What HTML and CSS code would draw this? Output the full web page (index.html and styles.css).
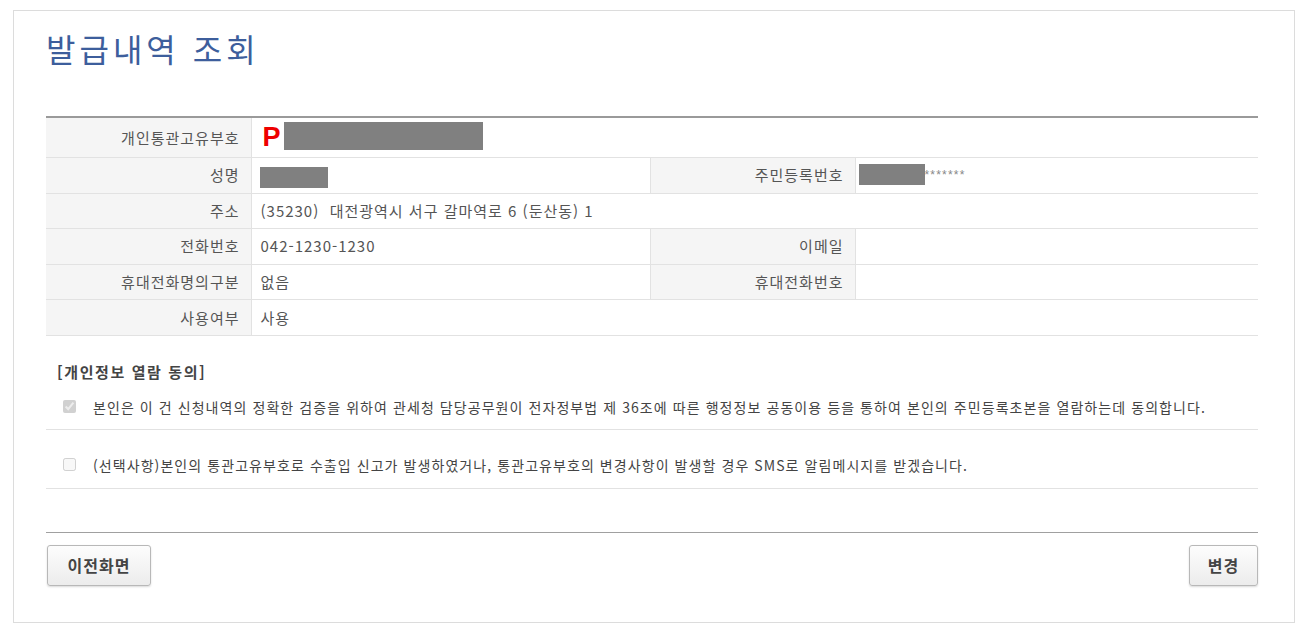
FILE: index.html
```html
<!DOCTYPE html>
<html lang="ko">
<head>
<meta charset="utf-8">
<title>발급내역 조회</title>
<link rel="stylesheet" href="styles.css">
</head>
<body>
<div class="page">
  <h1 class="title">발급내역 조회</h1>
  <table class="info">
    <colgroup>
      <col class="c-label"><col class="c-value"><col class="c-label"><col class="c-value2">
    </colgroup>
    <tr class="first">
      <th>개인통관고유부호</th>
      <td colspan="3"><span class="pcode">P</span><span class="mask mask-code"></span></td>
    </tr>
    <tr>
      <th>성명</th>
      <td><span class="mask mask-name"></span></td>
      <th>주민등록번호</th>
      <td><span class="mask mask-rrn"></span><span class="stars">*******</span></td>
    </tr>
    <tr>
      <th>주소</th>
      <td colspan="3">(35230)&nbsp;&nbsp;대전광역시 서구 갈마역로 6 (둔산동) 1</td>
    </tr>
    <tr>
      <th>전화번호</th>
      <td>042-1230-1230</td>
      <th>이메일</th>
      <td></td>
    </tr>
    <tr>
      <th>휴대전화명의구분</th>
      <td>없음</td>
      <th>휴대전화번호</th>
      <td></td>
    </tr>
    <tr>
      <th>사용여부</th>
      <td colspan="3">사용</td>
    </tr>
  </table>

  <div class="consent">
    <p class="consent-title">[개인정보 열람 동의]</p>
    <label class="agree agree-first">
      <input type="checkbox" checked disabled>
      <span>본인은 이 건 신청내역의 정확한 검증을 위하여 관세청 담당공무원이 전자정부법 제 36조에 따른 행정정보 공동이용 등을 통하여 본인의 주민등록초본을 열람하는데 동의합니다.</span>
    </label>
    <label class="agree agree-second">
      <input type="checkbox" disabled>
      <span>(선택사항)본인의 통관고유부호로 수출입 신고가 발생하였거나, 통관고유부호의 변경사항이 발생할 경우 SMS로 알림메시지를 받겠습니다.</span>
    </label>
  </div>

  <div class="actions">
    <button class="btn btn-prev">이전화면</button>
    <button class="btn btn-change">변경</button>
  </div>
</div>
</body>
</html>
```

FILE: styles.css
```css
html, body {
  margin: 0;
  padding: 0;
  background: #fff;
}
body {
  font-family: "Noto Sans CJK KR", "Noto Sans", sans-serif;
  color: #555;
  font-size: 13px;
}
.page {
  margin: 10px 8px 0 13px;
  border: 1px solid #dcdcdc;
  height: 613px;
  padding: 0 36px 0 32px;
  box-sizing: border-box;
}
.title {
  margin: 14px 0 0 0;
  font-size: 32px;
  font-weight: 400;
  letter-spacing: 4px;
  color: #3d5e9c;
  line-height: 46px;
  height: 91px;
}
.info {
  width: 100%;
  border-collapse: collapse;
  border-top: 2px solid #9a9a9a;
  table-layout: fixed;
}
.c-label { width: 205px; }
.c-value { width: 399px; }
.info th, .info td {
  height: 34.6px;
  border-bottom: 1px solid #e2e2e2;
  padding: 0;
  font-size: 15px;
  letter-spacing: 1px;
  line-height: 20px;
}
.info tr.first th, .info tr.first td { height: 39px; }
.info th {
  background: #f5f5f5;
  text-align: right;
  padding-right: 11px;
  font-weight: 400;
  color: #555;
  border-right: 1px solid #e2e2e2;
  border-left: 1px solid #e2e2e2;
}
.info tr th:first-child { border-left: none; }
.info td {
  padding-left: 9px;
  color: #555;
}
.pcode {
  color: #e00;
  font-weight: 700;
  font-size: 27px;
  letter-spacing: 0;
  vertical-align: middle;
  font-family: "Liberation Sans", Arial, sans-serif;
  margin-left: 2px;
  position: relative;
  top: -1px;
}
.mask {
  display: inline-block;
  background: #808080;
  vertical-align: middle;
}
.mask-code { width: 199px; height: 28px; margin-left: 3px; position: relative; top: -2px; }
.mask-name { width: 68px; height: 21px; margin-left: -1px; position: relative; top: 1px; }
.mask-rrn { width: 66px; height: 21px; margin-left: -6px; position: relative; top: -2px; }
.stars {
  color: #888;
  font-family: "Liberation Sans", Arial, sans-serif;
  font-size: 12px;
  letter-spacing: 1.2px;
  vertical-align: middle;
  position: relative;
  top: -1px;
}
.consent {
  margin-top: 26px;
}
.consent-title {
  margin: 0 0 0 11px;
  font-weight: 700;
  font-size: 15px;
  letter-spacing: 1.6px;
  color: #444;
  line-height: 20px;
}
.agree {
  display: flex;
  align-items: flex-start;
  box-sizing: border-box;
  border-bottom: 1px solid #e2e2e2;
  color: #444;
  font-size: 14px;
  letter-spacing: 1.07px;
  line-height: 20px;
}
.agree-first { height: 48px; padding-top: 15px; }
.agree-second { height: 59px; padding-top: 25px; }
.agree input {
  margin: 3px 17px 0 17px;
  width: 13px;
  height: 13px;
  flex: none;
}
.actions {
  margin-top: 43px;
  border-top: 1px solid #a0a0a0;
  padding-top: 12px;
  display: flex;
  justify-content: space-between;
}
.btn {
  height: 41px;
  padding: 0;
  border: 1px solid #b8b8b8;
  border-radius: 3px;
  background: linear-gradient(#fdfdfd, #ececec);
  box-shadow: 0 1px 2px rgba(0,0,0,0.15);
  font-family: "Noto Sans CJK KR", sans-serif;
  font-size: 16px;
  letter-spacing: 1px;
  font-weight: 700;
  color: #444;
  margin-left: 1px;
}
.btn-prev { width: 104px; }
.btn-change { width: 69px; }
```
